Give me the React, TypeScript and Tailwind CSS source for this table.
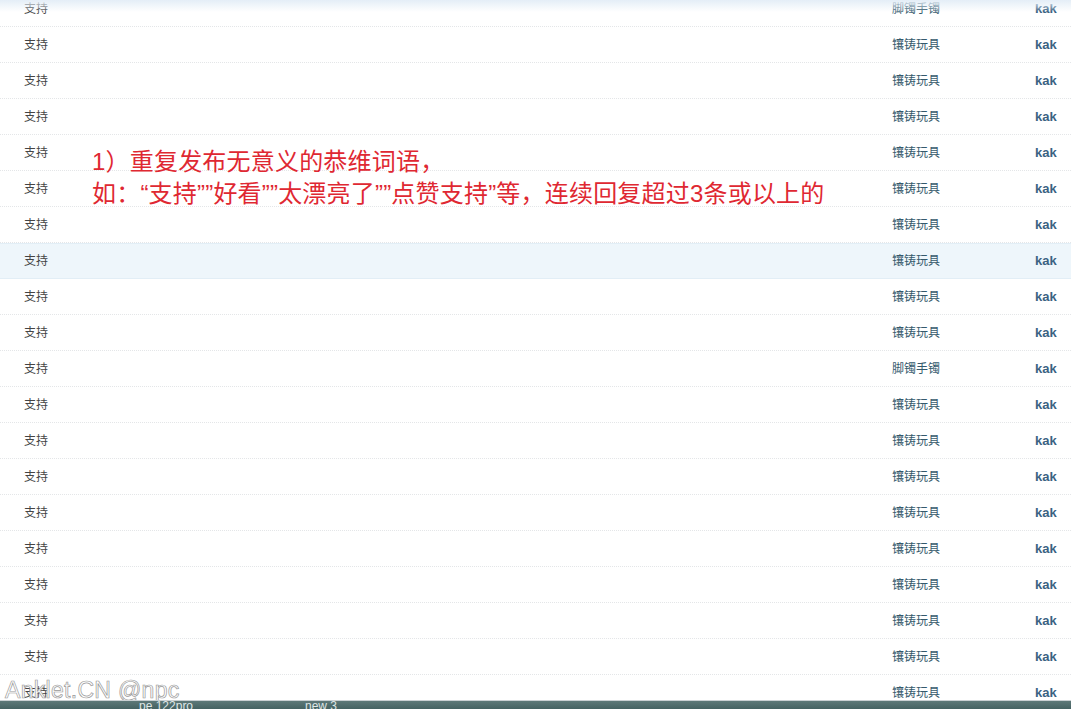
const rows = [
    "脚镯手镯", "镶铸玩具", "镶铸玩具", "镶铸玩具", "镶铸玩具", "镶铸玩具", "镶铸玩具", "镶铸玩具",
    "镶铸玩具", "镶铸玩具", "脚镯手镯", "镶铸玩具", "镶铸玩具", "镶铸玩具", "镶铸玩具", "镶铸玩具",
    "镶铸玩具", "镶铸玩具", "镶铸玩具", "镶铸玩具",
];

export default function App() {
    return (
        <div className="relative h-[709px] w-[1071px] overflow-hidden bg-white font-['Liberation_Sans','Noto_Sans_CJK_SC',sans-serif]">
            <div className="relative h-[701px] overflow-hidden border-b border-[#c9cfd2]">
                <div className="-mt-[9px]">
                    {rows.map((product, index) => (
                        <div
                            key={index}
                            className={
                                index === 7
                                    ? "flex h-[36px] items-center border-y border-[#e2eef6] bg-[#eef6fb]"
                                    : "flex h-[36px] items-center border-b border-dotted border-[#e4e6e8]"
                            }
                        >
                            <span className="flex-1 pl-[24px] text-[12px] text-[#444]">支持</span>
                            <span className="w-[143px] text-[12px] text-[#35596c]">{product}</span>
                            <span className="w-[36px] text-[13px] font-bold text-[#3b6282]">kak</span>
                        </div>
                    ))}
                </div>

                <div className="pointer-events-none absolute inset-x-0 top-0 h-[12px] bg-gradient-to-b from-[#e4eef7] to-transparent" />

                <div className="absolute left-[92px] top-[146px] text-[24px] leading-[32px] tracking-[0.2px] text-[#df2832]">
                    <p>1）重复发布无意义的恭维词语，</p>
                    <p>如：“支持””好看””太漂亮了””点赞支持”等，连续回复超过3条或以上的</p>
                </div>

                <div className="absolute left-[5px] top-[675px] text-[23px] leading-[30px] tracking-[0.3px] text-white [-webkit-text-stroke:0.7px_#999]">
                    Anklet.CN @npc
                </div>
            </div>

            <div className="flex h-[8px] items-start overflow-hidden bg-gradient-to-b from-[#5d7878] to-[#456262] text-[12px] leading-[10px] text-[#dfe6e6]">
                <span className="ml-[139px] w-[166px]">pe 122pro</span>
                <span>new 3</span>
            </div>
        </div>
    );
}
